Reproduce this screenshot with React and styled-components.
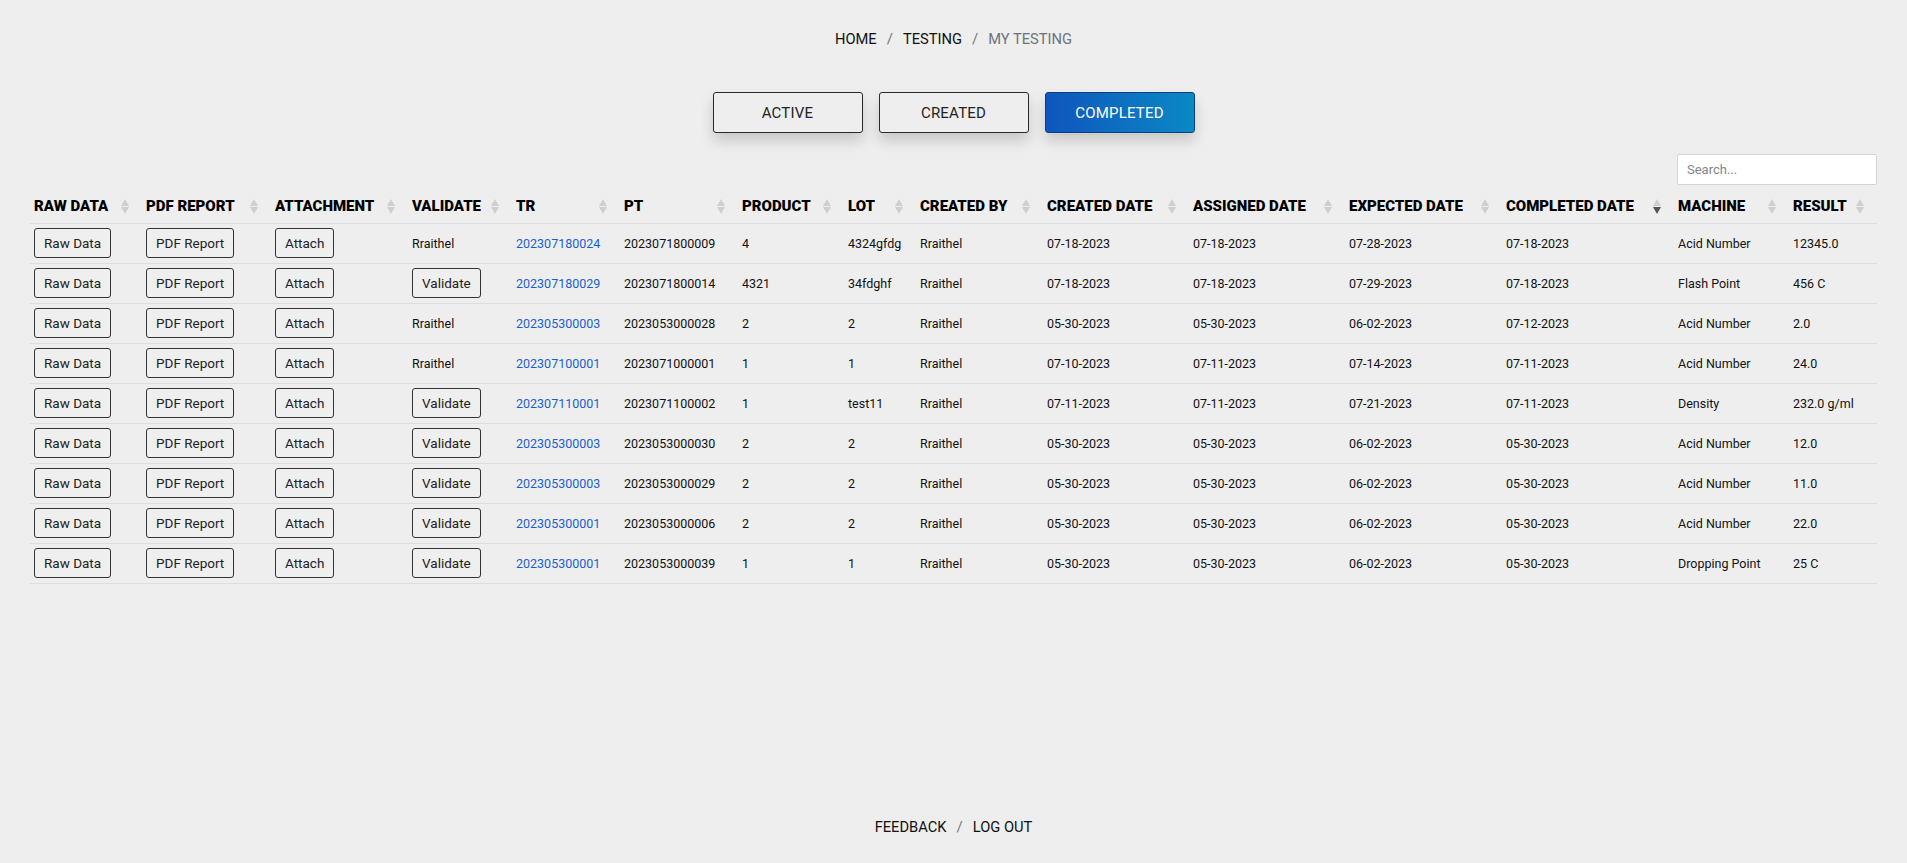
import React from "react";
import styled, { createGlobalStyle } from "styled-components";

const GlobalStyle = createGlobalStyle`
  html, body {
    margin: 0;
    padding: 0;
    background: #eeeeee;
    font-family: Roboto, "Noto Sans", "Liberation Sans", sans-serif;
    color: #111;
  }
  * {
    box-sizing: border-box;
  }
`;

const columns = [
  { label: "Raw Data", width: 112 },
  { label: "PDF Report", width: 129 },
  { label: "Attachment", width: 137 },
  { label: "Validate", width: 104 },
  { label: "TR", width: 108 },
  { label: "PT", width: 118 },
  { label: "Product", width: 106 },
  { label: "Lot", width: 72 },
  { label: "Created By", width: 127 },
  { label: "Created Date", width: 146 },
  { label: "Assigned Date", width: 156 },
  { label: "Expected Date", width: 157 },
  { label: "Completed Date", width: 172, sorted: true },
  { label: "Machine", width: 115 },
  { label: "Result", width: 88 },
];

const rows = [
  { validated: true, tr: "202307180024", pt: "2023071800009", product: "4", lot: "4324gfdg", created: "07-18-2023", assigned: "07-18-2023", expected: "07-28-2023", completed: "07-18-2023", machine: "Acid Number", result: "12345.0" },
  { validated: false, tr: "202307180029", pt: "2023071800014", product: "4321", lot: "34fdghf", created: "07-18-2023", assigned: "07-18-2023", expected: "07-29-2023", completed: "07-18-2023", machine: "Flash Point", result: "456 C" },
  { validated: true, tr: "202305300003", pt: "2023053000028", product: "2", lot: "2", created: "05-30-2023", assigned: "05-30-2023", expected: "06-02-2023", completed: "07-12-2023", machine: "Acid Number", result: "2.0" },
  { validated: true, tr: "202307100001", pt: "2023071000001", product: "1", lot: "1", created: "07-10-2023", assigned: "07-11-2023", expected: "07-14-2023", completed: "07-11-2023", machine: "Acid Number", result: "24.0" },
  { validated: false, tr: "202307110001", pt: "2023071100002", product: "1", lot: "test11", created: "07-11-2023", assigned: "07-11-2023", expected: "07-21-2023", completed: "07-11-2023", machine: "Density", result: "232.0 g/ml" },
  { validated: false, tr: "202305300003", pt: "2023053000030", product: "2", lot: "2", created: "05-30-2023", assigned: "05-30-2023", expected: "06-02-2023", completed: "05-30-2023", machine: "Acid Number", result: "12.0" },
  { validated: false, tr: "202305300003", pt: "2023053000029", product: "2", lot: "2", created: "05-30-2023", assigned: "05-30-2023", expected: "06-02-2023", completed: "05-30-2023", machine: "Acid Number", result: "11.0" },
  { validated: false, tr: "202305300001", pt: "2023053000006", product: "2", lot: "2", created: "05-30-2023", assigned: "05-30-2023", expected: "06-02-2023", completed: "05-30-2023", machine: "Acid Number", result: "22.0" },
  { validated: false, tr: "202305300001", pt: "2023053000039", product: "1", lot: "1", created: "05-30-2023", assigned: "05-30-2023", expected: "06-02-2023", completed: "05-30-2023", machine: "Dropping Point", result: "25 C" },
];

const App = () => {
  return (
    <Page>
      <GlobalStyle />
      <Breadcrumb>
        <Crumb>Home</Crumb>
        <Slash>/</Slash>
        <Crumb>Testing</Crumb>
        <Slash>/</Slash>
        <Crumb $current>My Testing</Crumb>
      </Breadcrumb>

      <Tabs>
        <Tab>Active</Tab>
        <Tab>Created</Tab>
        <Tab $active>Completed</Tab>
      </Tabs>

      <Content>
        <Toolbar>
          <Search placeholder="Search..." />
        </Toolbar>
        <Table>
          <colgroup>
            {columns.map((col) => (
              <col key={col.label} style={{ width: col.width }} />
            ))}
          </colgroup>
          <thead>
            <tr>
              {columns.map((col) => (
                <Th key={col.label}>
                  {col.label}
                  <SortIcon>
                    <Up />
                    <Down $on={col.sorted} />
                  </SortIcon>
                </Th>
              ))}
            </tr>
          </thead>
          <tbody>
            {rows.map((row, index) => (
              <tr key={index}>
                <Td>
                  <CellButton>Raw Data</CellButton>
                </Td>
                <Td>
                  <CellButton>PDF Report</CellButton>
                </Td>
                <Td>
                  <CellButton>Attach</CellButton>
                </Td>
                <Td>
                  {row.validated ? "Rraithel" : <CellButton>Validate</CellButton>}
                </Td>
                <Td>
                  <TrLink href="#">{row.tr}</TrLink>
                </Td>
                <Td>{row.pt}</Td>
                <Td>{row.product}</Td>
                <Td>{row.lot}</Td>
                <Td>Rraithel</Td>
                <Td>{row.created}</Td>
                <Td>{row.assigned}</Td>
                <Td>{row.expected}</Td>
                <Td>{row.completed}</Td>
                <Td>{row.machine}</Td>
                <Td>{row.result}</Td>
              </tr>
            ))}
          </tbody>
        </Table>
      </Content>

      <Footer>
        <Crumb>Feedback</Crumb>
        <Slash>/</Slash>
        <Crumb>Log Out</Crumb>
      </Footer>
    </Page>
  );
};

const Page = styled.div`
  min-height: 863px;
  display: flex;
  flex-direction: column;
`;

const Breadcrumb = styled.nav`
  display: flex;
  justify-content: center;
  align-items: center;
  gap: 10px;
  padding-top: 28px;
  height: 50px;
  line-height: 22px;
`;

const Crumb = styled.span`
  font-size: 14.7px;
  text-transform: uppercase;
  color: ${(p) => (p.$current ? "#6c737b" : "#111")};
`;

const Slash = styled.span`
  font-size: 15px;
  color: #777;
`;

const Tabs = styled.div`
  display: flex;
  justify-content: center;
  gap: 16px;
  margin-top: 42px;
`;

const Tab = styled.button`
  width: 150px;
  height: 41px;
  font-family: inherit;
  font-size: 15px;
  text-transform: uppercase;
  letter-spacing: 0.2px;
  border-radius: 3px;
  cursor: pointer;
  border: 1px solid ${(p) => (p.$active ? "#0b3f7e" : "#2a2a2a")};
  color: ${(p) => (p.$active ? "#fff" : "#222")};
  background: ${(p) =>
    p.$active ? "linear-gradient(90deg, #0f55bd 0%, #0a89c5 100%)" : "#eeeeee"};
  box-shadow: 0 8px 14px rgba(0, 0, 0, 0.16);
`;

const Content = styled.div`
  padding: 0 30px;
`;

const Toolbar = styled.div`
  display: flex;
  justify-content: flex-end;
  margin-top: 21px;
`;

const Search = styled.input`
  width: 200px;
  height: 31px;
  padding: 0 9px;
  border: 1px solid #d5d5d5;
  border-radius: 2px;
  background: #fff;
  font-family: inherit;
  font-size: 13px;
  color: #333;
  outline: none;
  &::placeholder {
    color: #80868c;
  }
`;

const Table = styled.table`
  width: 1847px;
  table-layout: fixed;
  border-collapse: collapse;
`;

const Th = styled.th`
  position: relative;
  height: 38px;
  padding: 10px 4px 6px;
  text-align: left;
  font-size: 15px;
  font-weight: 900;
  text-transform: uppercase;
  white-space: nowrap;
  color: #000;
  border-bottom: 1px solid #dcdde2;
`;

const SortIcon = styled.span`
  position: absolute;
  right: 13px;
  top: 14px;
  display: flex;
  flex-direction: column;
  gap: 1px;
`;

const Up = styled.span`
  width: 0;
  height: 0;
  border-left: 4px solid transparent;
  border-right: 4px solid transparent;
  border-bottom: 7px solid #cfcfcf;
`;

const Down = styled.span`
  width: 0;
  height: 0;
  border-left: 4px solid transparent;
  border-right: 4px solid transparent;
  border-top: 7px solid ${(p) => (p.$on ? "#555" : "#cfcfcf")};
`;

const Td = styled.td`
  height: 40px;
  padding: 0 4px;
  font-size: 12.5px;
  white-space: nowrap;
  color: #111;
  border-bottom: 1px solid #dcdde2;
`;

const CellButton = styled.button`
  height: 30px;
  padding: 0 9px;
  font-family: inherit;
  font-size: 13.5px;
  color: #222;
  background: #efefef;
  border: 1px solid #333;
  border-radius: 3px;
  cursor: pointer;
`;

const TrLink = styled.a`
  color: #1b5ecf;
  text-decoration: none;
`;

const Footer = styled.footer`
  margin-top: auto;
  display: flex;
  justify-content: center;
  align-items: center;
  gap: 10px;
  line-height: 22px;
  padding-bottom: 25px;
`;

export default App;
